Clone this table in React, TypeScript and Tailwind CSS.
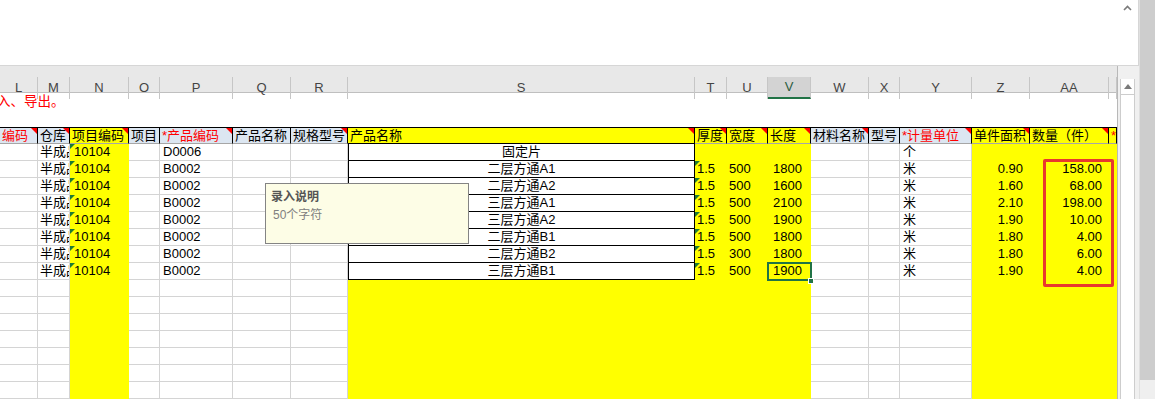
import React from "react";

const widths = [38, 32, 59, 31, 73, 58, 57, 347, 32, 41, 43, 58, 31, 72, 58, 79, 8];
const letters = ["L", "M", "N", "O", "P", "Q", "R", "S", "T", "U", "V", "W", "X", "Y", "Z", "AA", ""];
const gridCols =
  "grid grid-cols-[38px_32px_59px_31px_73px_58px_57px_347px_32px_41px_43px_58px_31px_72px_58px_79px_8px]";

// N, S, T, U, V, Z, AA, AB are filled yellow below the data
const yellowCols = [2, 7, 8, 9, 10, 14, 15, 16];

type Head = { t: string; red?: boolean; yellow?: boolean; flag?: boolean };
const heads: Head[] = [
  { t: "编码", red: true, flag: true },
  { t: "仓库", flag: true },
  { t: "项目编码", yellow: true, flag: true },
  { t: "项目" },
  { t: "*产品编码", red: true, flag: true },
  { t: "产品名称" },
  { t: "规格型号", flag: true },
  { t: "产品名称", yellow: true, flag: true },
  { t: "厚度", yellow: true, flag: true },
  { t: "宽度", yellow: true, flag: true },
  { t: "长度", yellow: true, flag: true },
  { t: "材料名称", flag: true },
  { t: "型号" },
  { t: "*计量单位", red: true, flag: true },
  { t: "单件面积", yellow: true, flag: true },
  { t: "数量（件）", yellow: true, flag: true },
  { t: "*", red: true, yellow: true },
];

const rows = [
  { p: "D0006", s: "固定片", t: "", u: "", v: "", y: "个", z: "", aa: "" },
  { p: "B0002", s: "二层方通A1", t: "1.5", u: "500", v: "1800", y: "米", z: "0.90", aa: "158.00" },
  { p: "B0002", s: "二层方通A2", t: "1.5", u: "500", v: "1600", y: "米", z: "1.60", aa: "68.00" },
  { p: "B0002", s: "三层方通A1", t: "1.5", u: "500", v: "2100", y: "米", z: "2.10", aa: "198.00" },
  { p: "B0002", s: "三层方通A2", t: "1.5", u: "500", v: "1900", y: "米", z: "1.90", aa: "10.00" },
  { p: "B0002", s: "二层方通B1", t: "1.5", u: "500", v: "1800", y: "米", z: "1.80", aa: "4.00" },
  { p: "B0002", s: "二层方通B2", t: "1.5", u: "300", v: "1800", y: "米", z: "1.80", aa: "6.00" },
  { p: "B0002", s: "三层方通B1", t: "1.5", u: "500", v: "1900", y: "米", z: "1.90", aa: "4.00" },
];

function RedFlag() {
  return (
    <svg className="absolute right-0 top-0" width="6" height="6" viewBox="0 0 6 6">
      <polygon points="0,0 6,0 6,6" fill="#ff0000" />
    </svg>
  );
}

function GreenFlag() {
  return (
    <svg className="absolute left-0 top-0" width="5" height="5" viewBox="0 0 5 5">
      <polygon points="0,0 5,0 0,5" fill="#1e7b34" />
    </svg>
  );
}

function ColumnHeader() {
  return (
    <div className="h-[27px] bg-[#e8e8e8] pt-[11px]">
      <div className={`${gridCols} h-[16px] border-b border-[#bfbfbf]`}>
        {letters.map((l, i) => (
          <div
            key={i}
            className={
              i === 10
                ? "flex items-center justify-center border-b-2 border-r border-b-[#217346] border-r-[#c6c6c6] bg-[#d3d3d3] text-[13px] text-[#2b5d3f]"
                : "flex items-center justify-center border-r border-[#c6c6c6] text-[13px] text-[#444]"
            }
          >
            {l}
          </div>
        ))}
      </div>
    </div>
  );
}

function HeaderRow() {
  return (
    <div className={`${gridCols} h-[17px]`}>
      {heads.map((h, i) => (
        <div
          key={i}
          className={
            "relative overflow-hidden whitespace-nowrap border-r border-t border-b border-r-black border-t-black pl-[2px] text-[13px] leading-[15px] " +
            (i === 7 ? "border-b-black " : "border-b-[#a6a6a6] ") +
            (h.yellow ? "bg-[#ffff00] " : "bg-[#dce6f1] ") +
            (h.red ? "text-[#ff0000]" : "text-black")
          }
        >
          {h.t}
          {h.flag && <RedFlag />}
        </div>
      ))}
    </div>
  );
}

function DataRow({ r }: { r: (typeof rows)[number] }) {
  const grid = "border-r border-b border-[#d4d4d4]";
  return (
    <div className={`${gridCols} h-[17px] text-[13px] leading-[16px]`}>
      <div className={grid} />
      <div className={`${grid} overflow-hidden whitespace-nowrap pl-[2px]`}>半成品</div>
      <div className="relative bg-[#ffff00] pl-[4px]">
        10104
        <GreenFlag />
      </div>
      <div className={grid} />
      <div className={`${grid} pl-[3px]`}>{r.p}</div>
      <div className={grid} />
      <div className={grid} />
      <div className="border-x border-b border-black text-center">{r.s}</div>
      <div className="relative bg-[#ffff00] pl-[2px]">
        {r.t}
        {r.t && <GreenFlag />}
      </div>
      <div className="bg-[#ffff00] pl-[2px]">{r.u}</div>
      <div className="bg-[#ffff00] pl-[5px]">{r.v}</div>
      <div className={grid} />
      <div className={grid} />
      <div className={`${grid} pl-[3px]`}>{r.y}</div>
      <div className="bg-[#ffff00] pr-[7px] text-right">{r.z}</div>
      <div className="bg-[#ffff00] pr-[7px] text-right">{r.aa}</div>
      <div className="bg-[#ffff00]" />
    </div>
  );
}

function EmptyRow() {
  return (
    <div className={`${gridCols} h-[17px]`}>
      {widths.map((_, i) =>
        yellowCols.includes(i) ? (
          <div key={i} className="bg-[#ffff00]" />
        ) : (
          <div key={i} className="border-r border-b border-[#d4d4d4]" />
        )
      )}
    </div>
  );
}

export default function App() {
  return (
    <div className="relative flex h-[399px] w-[1155px] overflow-hidden bg-white font-['Liberation_Sans','Noto_Sans_CJK_SC',sans-serif] text-black">
      <div className="flex w-[1139px] flex-col">
        <div className="flex h-[66px] justify-end border-b border-r border-[#d6d6d6] pr-[6px] pt-[5px]">
          <svg width="9" height="6" viewBox="0 0 9 6">
            <polyline points="1,5 4.5,1.5 8,5" fill="none" stroke="#7a7a7a" strokeWidth="1.6" />
          </svg>
        </div>
        <div className="flex flex-1">
          <div className="w-[1118px] border-r border-[#b8b8b8]">
            <ColumnHeader />
            <div className="h-[34px] pt-[1px] text-[13.5px] leading-[16px] text-[#ff0000]">
              <span className="-ml-[3px]">入、导出。</span>
            </div>
            <HeaderRow />
            {rows.map((r, i) => (
              <DataRow key={i} r={r} />
            ))}
            {Array.from({ length: 7 }).map((_, i) => (
              <EmptyRow key={i} />
            ))}
          </div>
          <div className="flex w-[21px] flex-col bg-[#f0f0f0] pl-[2px] pr-[4px] pt-[13px]">
            <div className="flex flex-1 flex-col border-x border-[#cdcdcd] bg-white">
              <div className="flex h-[16px] items-center justify-center border-b border-[#cdcdcd]">
                <svg width="8" height="5" viewBox="0 0 8 5">
                  <polygon points="0,5 4,0 8,5" fill="#7a7a7a" />
                </svg>
              </div>
            </div>
          </div>
        </div>
      </div>
      <div className="flex w-[16px] flex-col border-l border-[#e0e0e0] bg-[#cdcdcd]">
        <div className="flex-1" />
        <div className="h-[19px] bg-[#efefef]" />
      </div>

      <div className="absolute left-[265px] top-[183px] h-[61px] w-[204px] border border-[#848484] bg-[#fdfde6] px-[5px] pt-[4px] text-[12px] leading-[18px]">
        <div className="font-bold text-[#555]">录入说明</div>
        <div className="pl-[2px] text-[#808080]">50个字符</div>
      </div>

      <div className="absolute left-[767px] top-[262px] h-[19px] w-[45px] border-2 border-[#217346]" />
      <div className="absolute left-[808px] top-[278px] h-[6px] w-[6px] border border-white bg-[#217346]" />

      <div className="absolute left-[1043px] top-[159px] h-[128px] w-[71px] rounded-[2px] border-[3px] border-[#e8382e]" />
    </div>
  );
}
